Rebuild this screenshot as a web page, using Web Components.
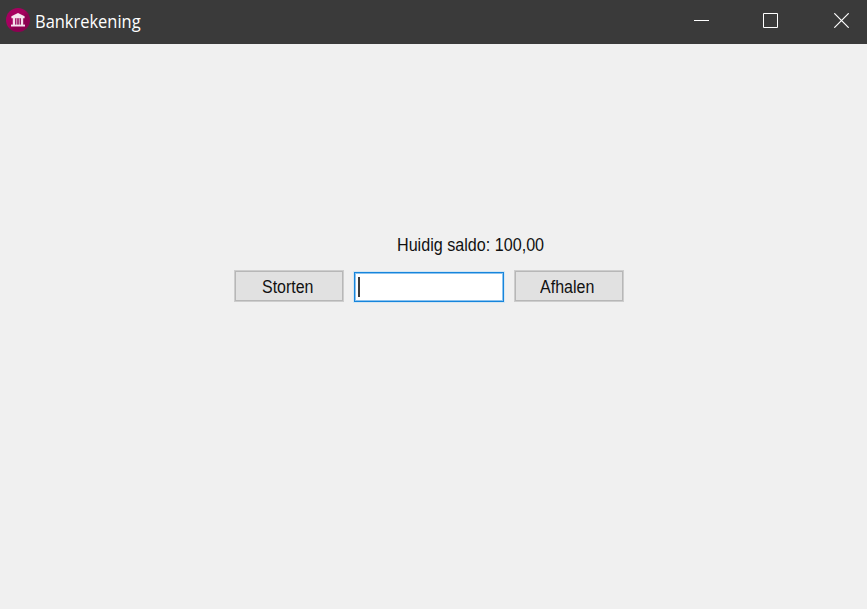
<!DOCTYPE html>
<html lang="nl">
<head>
<meta charset="utf-8">
<title>Bankrekening</title>
<style>
html, body { margin: 0; height: 100%; overflow: hidden; background: #f0f0f0; }
</style>
</head>
<body>
<account-window></account-window>
<script>
const define = (name, html, ready) => {
  const template = document.createElement('template');
  template.innerHTML = html;
  customElements.define(name, class extends HTMLElement {
    connectedCallback() {
      if (this.shadowRoot) return;
      this.attachShadow({ mode: 'open' }).append(template.content.cloneNode(true));
      if (ready) ready(this);
    }
  });
};

/* A line of text condensed to the width given in its attribute. */
define('fit-text', `
<style>
:host { display: block; flex: none; white-space: nowrap; }
span { display: inline-block; transform-origin: 0 50%; }
</style><span><slot></slot></span>`, el => {
  const span = el.shadowRoot.querySelector('span');
  const target = Number(el.getAttribute('width'));
  el.style.width = target + 'px';
  span.style.transform = `scaleX(${target / span.offsetWidth})`;
});

define('bank-icon', `
<style>:host { display: block; width: 24px; height: 24px; } svg { display: block; }</style>
<svg width="24" height="24" viewBox="0 0 24 24">
  <defs><linearGradient id="g" x1="0" y1="0" x2="1" y2="1"><stop offset="0.45" stop-color="#a6005f"/><stop offset="0.6" stop-color="#8c0051"/></linearGradient></defs>
  <circle cx="12" cy="12" r="12" fill="url(#g)"/>
  <path d="M12 5 L18.6 8.3 V10.2 H5.4 V8.3 Z" fill="#f5e3ee"/>
  <path d="M6.8 10h2.2v7H6.8zM15 10h2.2v7H15z" fill="#f3ddea"/>
  <path d="M9.8 10h1.6v7H9.8zM12.6 10h1.6v7h-1.6z" fill="#c987ae"/>
  <path d="M5 16.6h14v1.9H5z" fill="#f5e3ee"/>
</svg>`);

define('window-controls', `
<style>
:host { display: flex; align-items: center; gap: 54px; }
svg { display: block; fill: none; stroke: #fff; }
svg:last-child { margin-left: 2px; }
</style>
<svg width="15" height="15"><path d="M0 7.5H15"/></svg>
<svg width="15" height="15"><path d="M.5 .5H14.5V14.5H.5Z"/></svg>
<svg width="15" height="15"><path d="M.3 .3L14.7 14.7M14.7 .3L.3 14.7" stroke-width="1.2"/></svg>`);

define('title-bar', `
<style>
:host { display: flex; box-sizing: border-box; height: 44px; padding: 0 18px 3px 6px; align-items: center; background: #3a3a3a; color: #fff; font: 18px/24px "Open Sans", "Noto Sans", sans-serif; }
bank-icon { margin-bottom: 2px; }
fit-text { margin: 0 0 0 5px; }
window-controls { margin-left: auto; }
</style>
<bank-icon></bank-icon><fit-text width="106"><slot></slot></fit-text><window-controls></window-controls>`);

define('form-button', `
<style>
:host { display: block; width: 110px; height: 32px; }
button { display: flex; box-sizing: border-box; width: 100%; height: 100%; margin: 0; padding: 2px 4px 0 0; align-items: center; justify-content: center; border: 1px solid #cdcdcd; box-shadow: inset 0 0 0 1px #b7b7b7; border-radius: 0; background: #e1e1e1; color: #111; font: inherit; }
</style><button type="button"><slot></slot></button>`);

define('amount-field', `
<style>
:host { display: flex; box-sizing: border-box; width: 150px; height: 30px; padding: 4px 3px; border: 1px solid #1685dc; box-shadow: inset 0 0 0 1px #8cc3ef, 0 0 0 1px #d5e6f2; background: #fff; }
i { width: 2px; height: 20px; background: #3c3c3c; }
</style><i></i>`);

define('account-form', `
<style>
:host { display: flex; flex-direction: column; width: 390px; margin: 190px 0 0 234px; color: #111; font: 17.5px/22px "Liberation Sans", Arial, sans-serif; }
.balance { margin-left: 162.5px; }
.row { display: flex; align-items: flex-start; gap: 10px; margin-top: 14px; }
amount-field { margin-top: 2px; }
</style>
<fit-text class="balance" width="147.5">Huidig saldo: 100,00</fit-text>
<div class="row">
<form-button><fit-text width="51">Storten</fit-text></form-button>
<amount-field></amount-field>
<form-button><fit-text width="54">Afhalen</fit-text></form-button>
</div>`);

define('account-window', `
<style>:host { display: flex; flex-direction: column; height: 609px; background: #f0f0f0; }</style>
<title-bar>Bankrekening</title-bar><account-form></account-form>`);
</script>
</body>
</html>
